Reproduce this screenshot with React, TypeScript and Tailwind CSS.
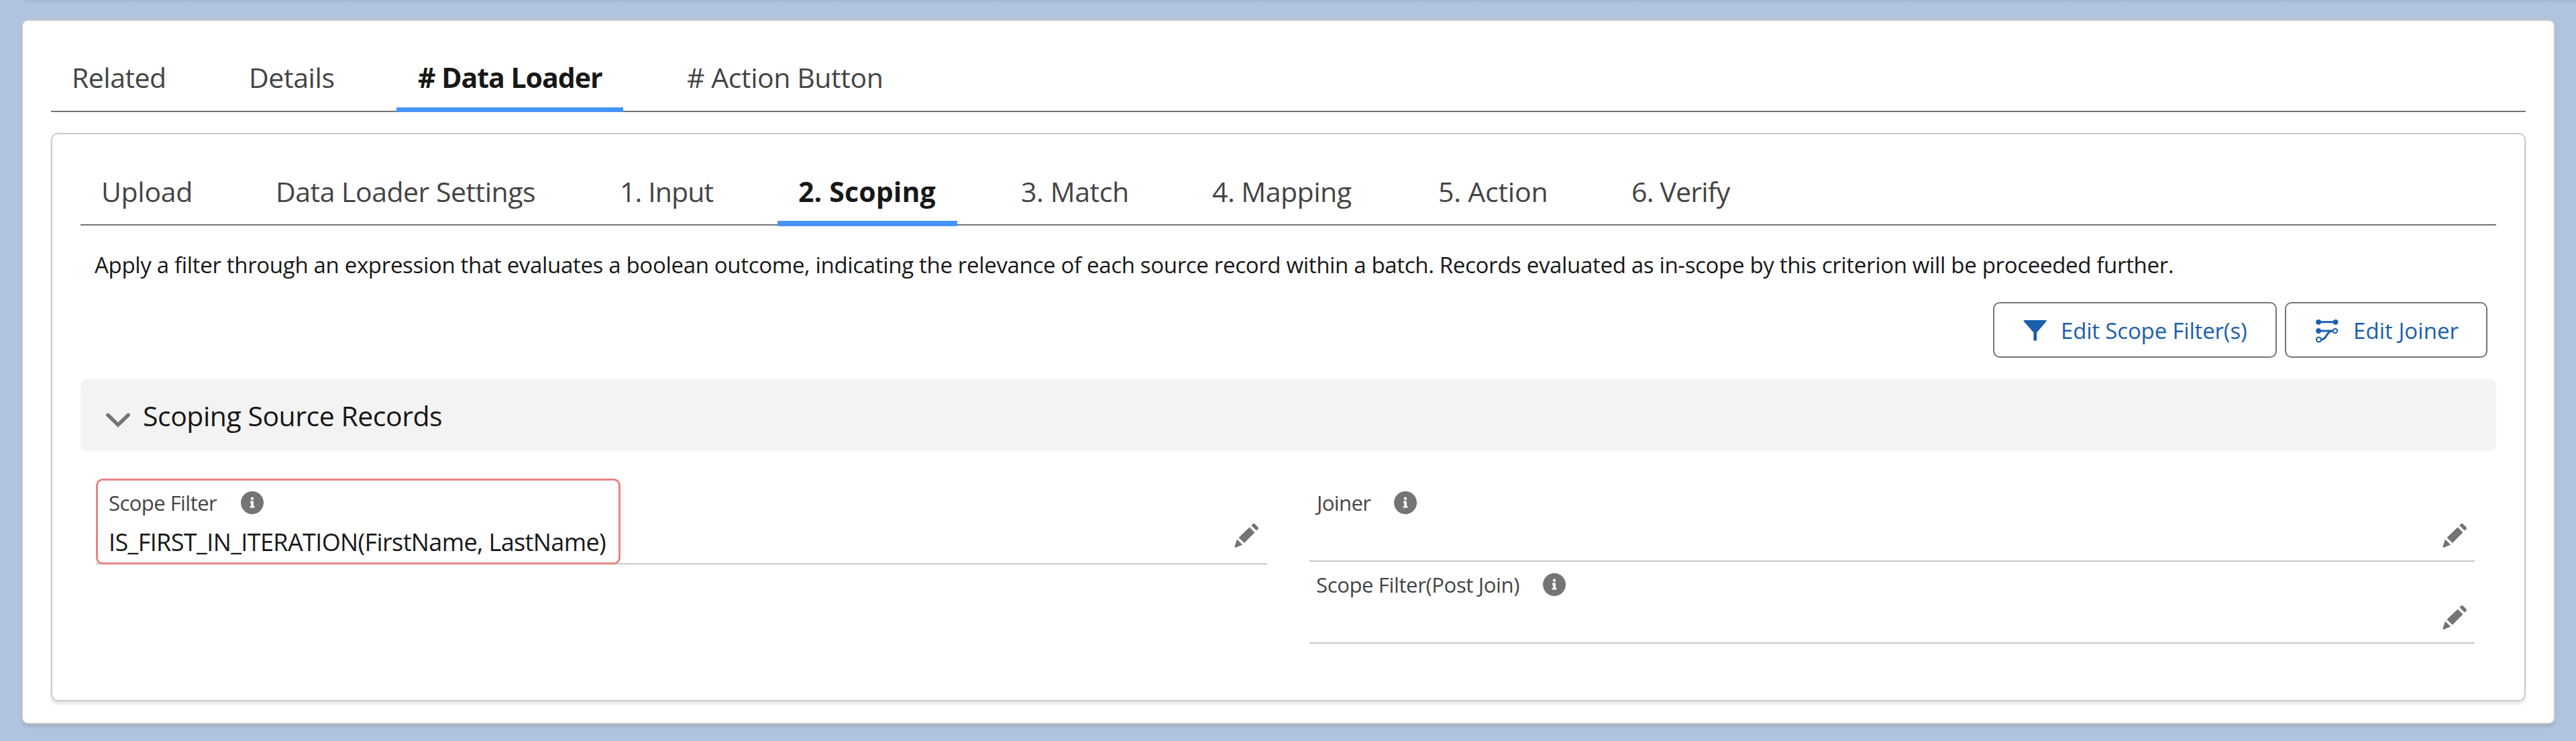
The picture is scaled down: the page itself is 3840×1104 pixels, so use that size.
type Tab = { label: string; className: string; active?: boolean };

const pageTabs: Tab[] = [
  { label: "Related", className: "w-[264px] tracking-[-0.516px]" },
  { label: "Details", className: "w-[220px] tracking-[-0.395px]" },
  { label: "# Data Loader", className: "w-[338px] pl-8 tracking-[-1px] border-b-[7px]", active: true },
  { label: "# Action Button", className: "ml-[95px] tracking-[-0.43px]" },
];

const stepTabs: Tab[] = [
  { label: "Upload", className: "w-[260px] tracking-[-0.3px]" },
  { label: "Data Loader Settings", className: "w-[513px] tracking-[-0.5px]" },
  { label: "1. Input", className: "w-[235px] tracking-[-0.9px]" },
  { label: "2. Scoping", className: "w-[268px] pl-[31px] tracking-[0.15px] border-b-8", active: true },
  { label: "3. Match", className: "ml-[95px] w-[285px] tracking-[-0.4px]" },
  { label: "4. Mapping", className: "w-[337px] tracking-[-0.5px]" },
  { label: "5. Action", className: "w-[288px] tracking-[-0.2px]" },
  { label: "6. Verify", className: "tracking-[-0.8px]" },
];

function TabItem({ tab, box }: { tab: Tab; box: string }) {
  return (
    <a
      className={`block shrink-0 text-[41px] leading-[60px] whitespace-nowrap ${box} ${tab.className} ${
        tab.active ? "border-[#4494fb] font-bold text-[#181818]" : "text-[#444444]"
      }`}
    >
      {tab.label}
    </a>
  );
}

function InfoIcon() {
  return (
    <svg viewBox="0 0 34 34" className="h-[34px] w-[34px] shrink-0" fill="#fff">
      <circle cx="17" cy="17" r="17" fill="#747474" />
      <circle cx="17" cy="10.800" r="2.200" />
      <path d="M14 14.600h5v7.400h1.400v2.600h-6.800V22h1.600v-4.600H14z" />
    </svg>
  );
}

function PencilIcon() {
  return (
    <svg viewBox="0 0 36 36" className="h-9 w-9 shrink-0" fill="#747474">
      <path d="M25.300 2.900l2.400-2.300a2 2 0 0 1 2.800 0l4.900 4.900a2 2 0 0 1 0 2.800l-2.400 2.300z" />
      <path d="M22.600 5.400l7.900 7.900L14.800 29l-8.300-7.900z" />
      <path d="M4 23.400l8.200 8.200-10 4.200c-1.100.4-2-.4-1.700-1.500z" />
    </svg>
  );
}

function FilterIcon() {
  return (
    <svg viewBox="0 0 36 36" className="h-9 w-9 shrink-0" fill="#1b5fae">
      <path d="M1.600 2h32c1 0 1.400 1 .8 1.800L20.200 20.400v11.200c0 .6-.4 1-1 1h-2.800c-.6 0-1-.4-1-1V20.400L.8 3.800C.2 3 .6 2 1.600 2z" />
    </svg>
  );
}

function JoinerIcon() {
  return (
    <svg viewBox="0 0 36 36" className="h-9 w-9 shrink-0" fill="none" stroke="#1b5fae" strokeWidth="3">
      <path d="M4 4.800h26M4 18h22" />
      <g fill="#1b5fae" stroke="none">
        <circle cx="4.200" cy="4.800" r="3.900" />
        <circle cx="29.600" cy="4.800" r="3.900" />
        <circle cx="4.200" cy="18" r="3.900" />
      </g>
      <circle cx="29" cy="18" r="3.200" strokeWidth="2" />
      <circle cx="4.600" cy="31" r="3.500" strokeWidth="2.200" />
      <path d="M8 31c9 0 7.500-12 16-13" />
    </svg>
  );
}

function EmptyField({ label, className }: { label: string; className: string }) {
  return (
    <div className={`flex items-start justify-between border-b-2 border-[#c9c9c9] ${className}`}>
      <div className="flex h-[34px] items-center gap-[35px] text-[31px] leading-[34px] text-[#444444]">
        <span>{label}</span>
        <InfoIcon />
      </div>
      <div className="mt-12 mr-3">
        <PencilIcon />
      </div>
    </div>
  );
}

export default function App() {
  return (
    <div className="h-[1104px] w-[3840px] overflow-hidden bg-[#b0c4df] font-['Open_Sans',sans-serif]">
      <div className="ml-9 h-[29px] bg-linear-to-b from-[#a0b3d0] to-[#b0c4df] to-[5px]" />
      <main className="ml-8 h-[1050px] w-[3777px] rounded-[10px] border-2 border-[#c9c9c9] bg-white px-[42px] shadow-[0_4px_4px_rgba(0,0,0,0.1)]">
        <nav className="flex h-[136px] border-b-2 border-[#747474] pl-[31px]">
          {pageTabs.map((tab) => (
            <TabItem key={tab.label} tab={tab} box="h-[136px] pt-[54px]" />
          ))}
        </nav>

        <section className="mt-[31px] h-[847px] rounded-[10px] border-2 border-[#c9c9c9] px-[42px] shadow-[0_4px_4px_rgba(0,0,0,0.1)]">
          <nav className="flex h-[136px] border-b-2 border-[#747474] pl-[31px]">
            {stepTabs.map((tab) => (
              <TabItem key={tab.label} tab={tab} box="h-[137px] pt-[55px]" />
            ))}
          </nav>

          <p className="mt-[39px] pl-[21px] text-[33px] leading-[40px] tracking-[-0.325px] whitespace-nowrap text-[#181818]">
            Apply a filter through an expression that evaluates a boolean outcome, indicating the relevance of each source
            record within a batch. Records evaluated as in-scope by this criterion will be proceeded further.
          </p>

          <div className="mt-[35px] mr-[13px] flex justify-end gap-3 text-[33px] leading-[40px] whitespace-nowrap text-[#1b5fae]">
            <button className="flex h-[83px] w-[423px] items-center rounded-[10px] border-2 border-[#747474] pt-[2px] pl-[43px]">
              <FilterIcon />
              <span className="ml-5 tracking-[-0.167px]">Edit Scope Filter(s)</span>
            </button>
            <button className="flex h-[83px] w-[302px] items-center rounded-[10px] border-2 border-[#747474] pt-[2px] pl-[44px]">
              <JoinerIcon />
              <span className="ml-5 tracking-[0.05px]">Edit Joiner</span>
            </button>
          </div>

          <h3 className="mt-8 flex h-[107px] items-center rounded-[10px] bg-[#f3f3f3] pl-[38px] text-[41px] leading-[60px] text-[#181818]">
            <svg viewBox="0 0 36 22" className="mt-[14px] h-[22px] w-9" fill="none" stroke="#747474" strokeWidth="5.400">
              <path d="M2.800 3.300L18 18 33.200 3.300" strokeLinecap="round" />
            </svg>
            <span className="ml-[19px] tracking-[-0.481px]">Scoping Source Records</span>
          </h3>

          <div className="mt-[41px] flex items-start pl-[23px]">
            <div className="flex h-32 w-[1746px] items-start justify-between border-b-2 border-[#c9c9c9]">
              <div className="h-32 w-[782px] rounded-[10px] border-3 border-[#e98484] bg-white pl-[16px] whitespace-nowrap">
                <div className="mt-[16px] flex h-[34px] items-center text-[31px] leading-[34px] text-[#444444]">
                  <span className="mr-[36px] tracking-[-0.548px]">Scope Filter</span>
                  <InfoIcon />
                </div>
                <div className="mt-[22px] text-[36px] leading-[40px] tracking-[-0.617px] text-[#181818]">
                  IS_FIRST_IN_ITERATION(FirstName, LastName)
                </div>
              </div>
              <div className="mt-[67px] mr-[13px]">
                <PencilIcon />
              </div>
            </div>
            <div className="ml-[63px] w-[1737px]">
              <EmptyField label="Joiner" className="h-[124px] pt-[19px] pl-[11px] tracking-[-0.6px]" />
              <EmptyField label="Scope Filter(Post Join)" className="h-[122px] pt-[17px] pl-[10px] tracking-[-0.35px]" />
            </div>
          </div>
        </section>
      </main>
    </div>
  );
}
